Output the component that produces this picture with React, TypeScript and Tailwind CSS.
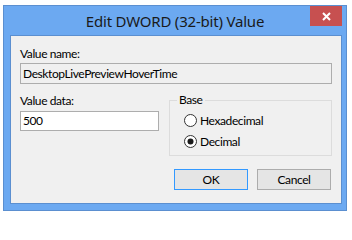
import React from "react";

function Radio({ checked, label }: { checked?: boolean; label: string }) {
  return (
    <div className="flex items-center h-[13px]">
      <svg width="13" height="13" viewBox="0 0 13 13" className="shrink-0">
        <circle cx="6.5" cy="6.5" r="6" fill="#ffffff" stroke="#333333" strokeWidth="1" />
        {checked && <circle cx="6.5" cy="6.5" r="3" fill="#1a1a1a" />}
      </svg>
      <span className="ml-[3px] text-[12px] leading-[16px] text-black">{label}</span>
    </div>
  );
}

export default function App() {
  return (
    <div
      className="w-[352px] h-[216px] bg-white pt-[5px] pl-[3px] overflow-hidden"
      style={{ fontFamily: 'Lato, "Noto Sans", "Liberation Sans", sans-serif' }}
    >
      <div className="w-[344px] h-[206px] border border-[#5b8fd0] bg-[#6ca9f1] flex flex-col">
        {/* title bar */}
        <div className="relative h-[29px] flex items-center justify-center">
          <span
            className="text-[15px] leading-[20px] text-[#1a1a1a] tracking-[-0.2px]"
            style={{ fontFamily: '"Noto Sans", "Liberation Sans", sans-serif' }}
          >
            Edit DWORD (32-bit) Value
          </span>
          <div className="absolute top-0 right-[4px] w-[32px] h-[20px] bg-[#c75050] flex items-center justify-center">
            <svg width="9" height="9" viewBox="0 0 9 9">
              <path d="M1 1 L8 8 M8 1 L1 8" stroke="#ffffff" strokeWidth="2" />
            </svg>
          </div>
        </div>
        {/* client */}
        <div className="ml-[6px] w-[332px] h-[169px] border border-[#5b8fd0] bg-[#f0f0f0] px-[9px] flex flex-col text-[12px] leading-[16px] text-black tracking-[-0.4px]">
          <div className="mt-[10px] h-[16px]">Value name:</div>
          <div className="mt-[1px] w-[312px] h-[21px] border border-[#adadad] bg-[#f0f0f0] flex items-center pl-[2px]">
            DesktopLivePreviewHoverTime
          </div>
          <div className="mt-[9px] flex items-start">
            <div className="flex flex-col w-[139px]">
              <div className="h-[16px]">Value data:</div>
              <div className="mt-[2px] h-[20px] border border-[#adadad] bg-white flex items-center pl-[2px]">
                500
              </div>
            </div>
            <div className="relative ml-[10px] mt-[7px] w-[163px] h-[56px] border border-[#dcdcdc] pl-[14px] pt-[13px] flex flex-col gap-[8px]">
              <span className="absolute left-[7px] top-[-9px] bg-[#f0f0f0] px-[2px] leading-[16px]">Base</span>
              <Radio label="Hexadecimal" />
              <Radio label="Decimal" checked />
            </div>
          </div>
          <div className="mt-[13px] flex justify-end gap-[9px] pr-[1px]">
            <div className="w-[74px] h-[21px] border border-[#3399ff] bg-[#e5e5e5] flex items-center justify-center">
              OK
            </div>
            <div className="w-[74px] h-[21px] border border-[#acacac] bg-[#e5e5e5] flex items-center justify-center">
              Cancel
            </div>
          </div>
        </div>
      </div>
    </div>
  );
}
